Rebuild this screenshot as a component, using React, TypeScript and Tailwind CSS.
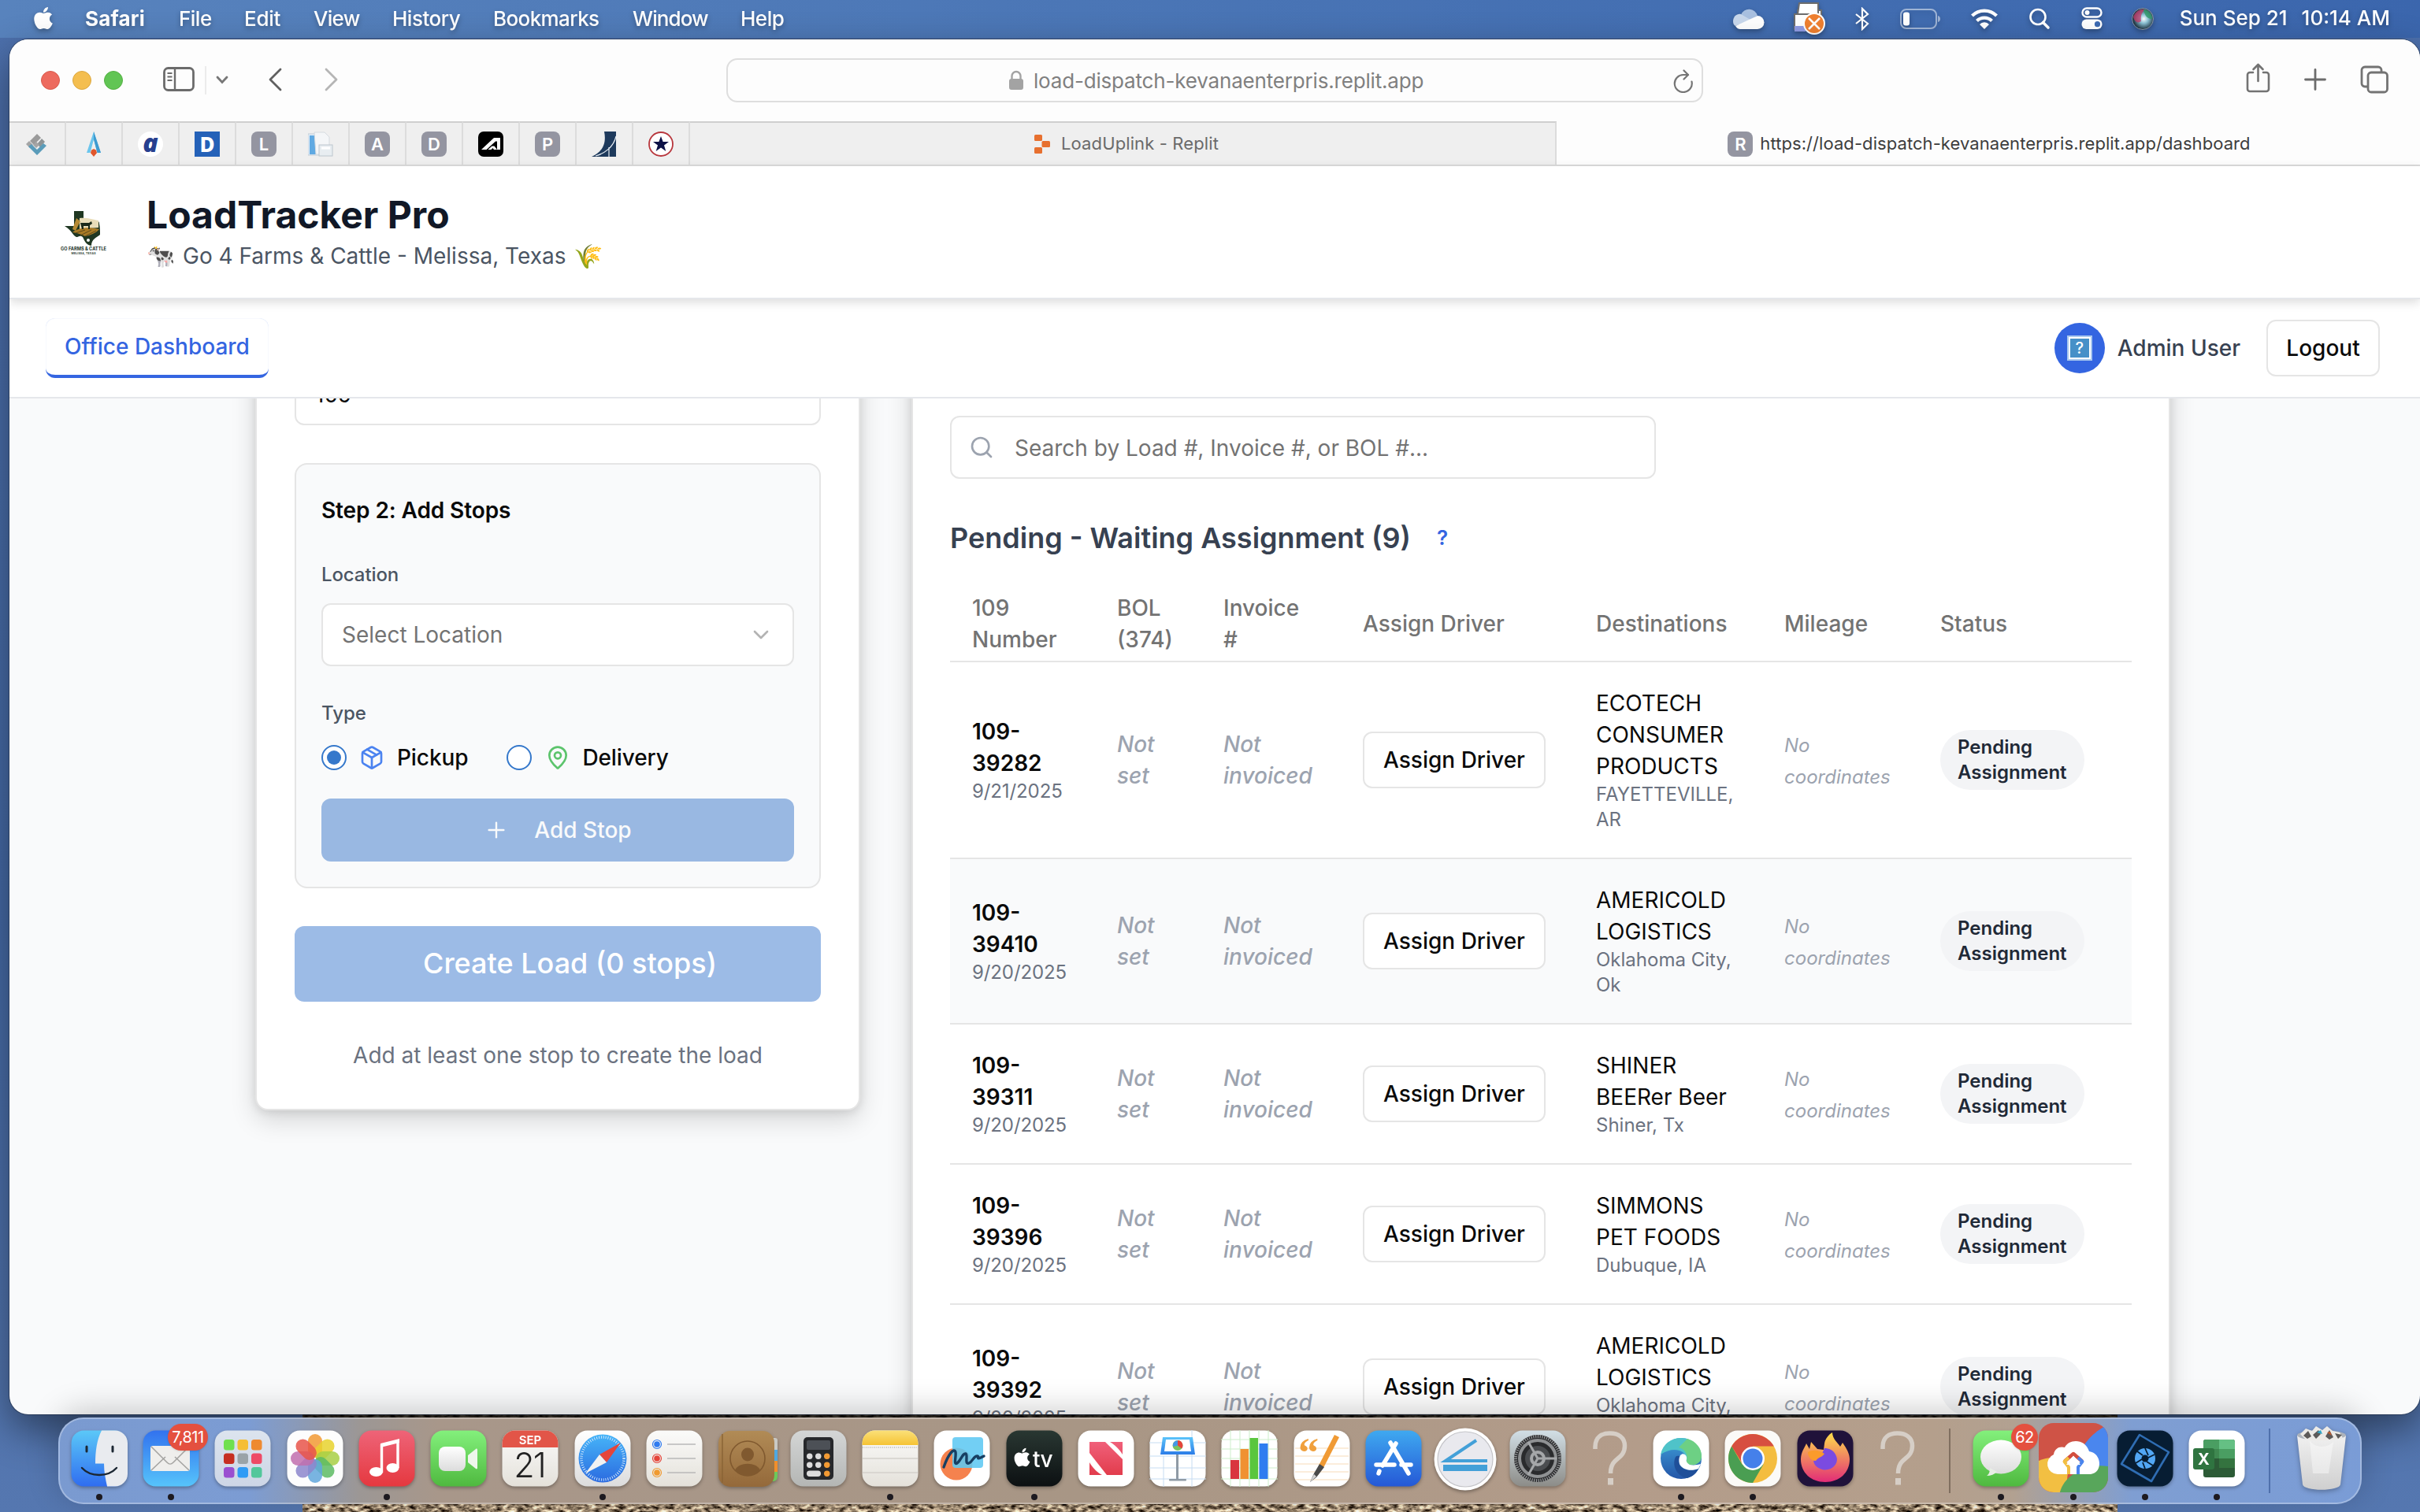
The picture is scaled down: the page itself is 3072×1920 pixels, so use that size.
import React from "react";
import { FaApple } from "react-icons/fa";
import { Package, MapPin, Plus, ChevronDown, Search } from "lucide-react";

/* ---------- Menu bar ---------- */

const MENUS = [
  { label: "Safari", cls: "w-[119px] font-bold tracking-[0.2px]" },
  { label: "File", cls: "w-[83px] tracking-[-0.5px]" },
  { label: "Edit", cls: "w-[88px] tracking-[-0.3px]" },
  { label: "View", cls: "w-[100px] tracking-[-0.7px]" },
  { label: "History", cls: "w-[128px] tracking-[-0.5px]" },
  { label: "Bookmarks", cls: "w-[177px] tracking-[-0.6px]" },
  { label: "Window", cls: "w-[137px] tracking-[-0.9px]" },
  { label: "Help", cls: "w-[60px] tracking-[-0.5px]" },
];

function MenuBar() {
  return (
    <div className="flex h-12 shrink-0 items-center bg-gradient-to-r from-[#5883bd] to-[#3b66ad] pr-[38px] pl-[41px] text-[26px] leading-none font-medium text-white">
      <FaApple className="mb-[2px] h-[32px] w-[28px] drop-shadow-[0_3px_3px_rgba(0,0,0,0.3)]" />
      <div className="mb-[1px] ml-[39px] flex drop-shadow-[0_3px_3px_rgba(0,0,0,0.3)]">
        {MENUS.map((m) => (
          <span key={m.label} className={m.cls}>{m.label}</span>
        ))}
      </div>
      <div className="ml-auto flex items-center drop-shadow-[0_3px_3px_rgba(0,0,0,0.3)]">
        <svg className="mb-[2px] h-[28px] w-[40px]" viewBox="0 0 40 28">
          <path d="M10 10a11 11 0 0 1 21 1l-9 5-14 8a9 9 0 0 1 2-15z" fill="#a9c0e0" />
          <path d="M0 18c0-6 5-10 10-9l12 7L3 24c-2-1-3-3-3-6z" fill="#c9d8ec" />
          <path d="M3 24l28-13a8.500 8.500 0 0 1 0 17H9c-2 0-4-1-6-4z" fill="#fff" />
        </svg>
        <svg className="mb-[2px] ml-[36px] h-[42px] w-[42px]" viewBox="0 0 42 42">
          <path d="M2 36V16h4v-5h30v10" fill="#fff" stroke="#6d6d6d" strokeWidth="2" />
          <path d="M6 16l2-14h24v14z" fill="#fff" stroke="#6d6d6d" strokeWidth="2" />
          <rect x="2" y="31" width="14" height="7" fill="#8f9be4" />
          <circle cx="27" cy="28" r="13" fill="#f08030" stroke="#fff" strokeWidth="2" />
          <path d="M20 21l14 14M34 21L20 35" stroke="#fff" strokeWidth="2.500" />
        </svg>
        <svg className="ml-[36px] h-[30px] w-[20px]" viewBox="0 0 20 30" fill="none" stroke="#fff" strokeWidth="2.200">
          <path d="M2 9l15 12-7 7V2l7 7L2 21" />
        </svg>
        <svg className="ml-[38px] h-[26px] w-[52px]" viewBox="0 0 52 26">
          <rect x="1" y="1" width="45" height="24" rx="7" fill="none" stroke="#fff" strokeOpacity="0.5" strokeWidth="2" />
          <rect x="4" y="4.500" width="8" height="17" rx="3" fill="#fff" />
          <path d="M48 9c4 1 4 7 0 8z" fill="#fff" fillOpacity="0.5" />
        </svg>
        <svg className="ml-[38px] h-[26px] w-[34px]" viewBox="0 0 34 26" fill="none" stroke="#fff" strokeWidth="4.200">
          <path d="M1.500 9a22 22 0 0 1 31 0" />
          <path d="M7.500 15.500a13.500 13.500 0 0 1 19 0" />
          <path d="M17 26l-6-6a8 8 0 0 1 12 0z" fill="#fff" stroke="none" />
        </svg>
        <svg className="ml-[39px] h-[28px] w-[28px]" viewBox="0 0 28 28" fill="none" stroke="#fff" strokeLinecap="round">
          <circle cx="12" cy="11.500" r="9.500" strokeWidth="2.600" />
          <path d="M18.500 18.500L25 25" strokeWidth="3.600" />
        </svg>
        <svg className="mb-[2px] ml-[39px] h-[28px] w-[28px]" viewBox="0 0 28 28">
          <rect x="1.500" y="1.500" width="24" height="11" rx="5.500" fill="none" stroke="#fff" strokeWidth="2.400" />
          <circle cx="7.500" cy="7" r="3" fill="#fff" />
          <rect x="0.500" y="15.500" width="26" height="12.500" rx="6" fill="#fff" />
          <circle cx="20.500" cy="21.700" r="3.600" fill="#3d6ab2" />
        </svg>
        <svg className="ml-[36px] h-[28px] w-[28px]" viewBox="0 0 28 28">
          <defs>
            <radialGradient id="siri" cx="0.55" cy="0.5">
              <stop offset="0" stopColor="#fff" />
              <stop offset="0.4" stopColor="#8fc5d8" />
              <stop offset="1" stopColor="#1d3340" />
            </radialGradient>
          </defs>
          <circle cx="14" cy="14" r="13.500" fill="url(#siri)" stroke="#8793a8" strokeWidth="1" />
          <path d="M2 12c2-8 10-11 15-10-4 3-6 8-5 15-4 3-8 1-10-5z" fill="#c43a68" opacity="0.75" />
          <path d="M15 2c7 0 11 7 11 12-5 0-9-2-11-12z" fill="#2f9a68" opacity="0.8" />
        </svg>
        <span className="mb-[2px] ml-[33px]">Sun Sep 21</span>
        <span className="mb-[2px] ml-[18px]">10:14 AM</span>
      </div>
    </div>
  );
}

/* ---------- Browser chrome ---------- */

function Toolbar() {
  return (
    <div className="flex h-[104px] shrink-0 items-center bg-[#fdfdfd]">
      <div className="ml-[40px] flex gap-4">
        <span className="size-6 rounded-full border border-[#d95a4c] bg-[#ed6a5e]" />
        <span className="size-6 rounded-full border border-[#dca73f] bg-[#f4be4f]" />
        <span className="size-6 rounded-full border border-[#54b043] bg-[#61c554]" />
      </div>
      <svg className="mb-[2px] ml-[51px] h-[32px] w-[40px]" viewBox="0 0 40 32" fill="none" stroke="#6b6b6b">
        <rect x="1.500" y="1.500" width="37" height="28" rx="5" strokeWidth="2.800" />
        <path d="M15 2v27" strokeWidth="2.400" />
        <path d="M5.500 8h6M5.500 12.500h6M5.500 17h6" strokeWidth="1.800" />
      </svg>
      <span className="ml-[13px] h-9 w-[2px] bg-[#ececec]" />
      <svg className="ml-[12px] h-[12px] w-[16px]" viewBox="0 0 16 12" fill="none" stroke="#777" strokeWidth="2.800" strokeLinecap="round">
        <path d="M2 2l6 6.500L14 2" />
      </svg>
      <svg className="mb-[2px] ml-[50px] h-[30px] w-[18px]" viewBox="0 0 18 30" fill="none" stroke="#606060" strokeWidth="2.800" strokeLinecap="round" strokeLinejoin="round">
        <path d="M16 2L3 15l13 13" />
      </svg>
      <svg className="mb-[2px] ml-[54px] h-[30px] w-[18px]" viewBox="0 0 18 30" fill="none" stroke="#b5b5b5" strokeWidth="2.800" strokeLinecap="round" strokeLinejoin="round">
        <path d="M2 2l13 13L2 28" />
      </svg>
      <div className="ml-[492px] flex h-[56px] w-[1240px] items-center rounded-[14px] border-2 border-[#dedede] bg-[#fdfdfd] text-[26px] text-[#808080]">
        <svg className="ml-[356px] h-[26px] w-[20px]" viewBox="0 0 20 26">
          <path d="M4.500 12V7.500a5.500 5.500 0 0 1 11 0V12" fill="none" stroke="#a3a3a3" strokeWidth="2.400" />
          <rect x="1" y="11" width="18" height="14" rx="3" fill="#a3a3a3" />
        </svg>
        <span className="ml-[12px] tracking-[-0.18px]">load-dispatch-kevanaenterpris.replit.app</span>
        <svg className="mt-[2px] mr-[10px] ml-auto h-[30px] w-[26px]" viewBox="0 0 26 30" fill="none" stroke="#757575" strokeWidth="2.200" strokeLinecap="round" strokeLinejoin="round">
          <path d="M23.500 15.500A11 11 0 1 1 13 7h6" />
          <path d="M13.500 1.500L19 7l-5.500 5.500" />
        </svg>
      </div>
      <div className="ml-[689px] flex items-center gap-[43px] pb-[2px]">
        <svg className="mb-1 h-[38px] w-[31px]" viewBox="0 0 31 38" fill="none" stroke="#737373" strokeWidth="2.600" strokeLinecap="round" strokeLinejoin="round">
          <path d="M9 12H5a3 3 0 0 0-3 3v18a3 3 0 0 0 3 3h21a3 3 0 0 0 3-3V15a3 3 0 0 0-3-3h-4" />
          <path d="M15.500 23V2M9.500 8l6-6 6 6" />
        </svg>
        <svg className="h-[28px] w-[28px]" viewBox="0 0 28 28" stroke="#6c6c6c" strokeWidth="2.800" strokeLinecap="round">
          <path d="M14 1.500v25M1.500 14h25" />
        </svg>
        <svg className="h-[36px] w-[36px]" viewBox="0 0 36 36" fill="none" stroke="#737373" strokeWidth="2.800">
          <rect x="10" y="9" width="24.500" height="25" rx="4" />
          <path d="M9 27H6a4 4 0 0 1-4-4V6a4 4 0 0 1 4-4h17a4 4 0 0 1 4 4v2" />
        </svg>
      </div>
    </div>
  );
}

function LetterIcon({ letter }: { letter: string }) {
  return (
    <span className="flex size-8 items-center justify-center rounded-lg bg-[#9495a1] text-[22px] leading-none font-semibold text-white">
      {letter}
    </span>
  );
}

const PINNED: React.ReactNode[] = [
  <svg className="size-8" viewBox="0 0 32 32">
    <path d="M16 3l5 5-9 9-5-5z" fill="#9a9a9a" />
    <path d="M22 9l4 4-6 7-4-4z" fill="#8e9496" />
    <path d="M2 16l4-4 5 5-4 4zM11 17l4-4 4 4-4 4z" fill="#a5a5a5" />
    <path d="M5 19l4-3 7 7 8-8 4 3-12 12z" fill="#5a9cba" />
  </svg>,
  <svg className="size-8" viewBox="0 0 32 32">
    <path d="M16 0L7 27h4.500L16 10l4.500 17H25z" fill="#6cc5ec" />
    <path d="M16 0l9 27h-4.500L16 10z" fill="#3f9bd0" />
    <path d="M16 22l4 5-4 5-4-5z" fill="#e0562c" />
    <circle cx="16" cy="26" r="3.600" fill="#e0562c" />
  </svg>,
  <span className="flex size-8 items-center justify-center rounded-full bg-white pb-1 font-['Open_Sans'] text-[32px] leading-none font-extrabold text-[#27408f] italic">a</span>,
  <span className="flex size-8 items-center justify-center bg-[#2461b8] font-['Noto_Sans'] text-[26px] leading-none font-extrabold text-white">D</span>,
  <LetterIcon letter="L" />,
  <svg className="size-8" viewBox="0 0 32 32">
    <rect x="0" y="3" width="14" height="27" fill="#e3eef8" stroke="#c2ccd6" />
    <rect x="2" y="5" width="8" height="24" fill="#5fa9e2" />
    <path d="M8 1h13l6 6v22H10z" fill="#f4f6f8" stroke="#d5dbe0" />
    <rect x="14" y="17" width="17" height="14" fill="#e8edf1" stroke="#bcc6ce" />
    <path d="M17 21h11" stroke="#fff" strokeWidth="3" />
  </svg>,
  <LetterIcon letter="A" />,
  <LetterIcon letter="D" />,
  <svg className="size-8" viewBox="0 0 32 32">
    <rect width="32" height="32" rx="7" fill="#000" />
    <path d="M4 23L20 8h8v15h-4V12.500h-2L10.500 23z" fill="#fff" />
    <path d="M12.500 23l5-4.500h3L24 23h-4l-1.500-2-2 2z" fill="#fff" />
  </svg>,
  <LetterIcon letter="P" />,
  <svg className="size-8" viewBox="0 0 32 32">
    <path d="M16 0h15v32H0c9-4 20-12 16-32z" fill="#1e3a5c" />
    <path d="M31 6C28 20 16 28 5 31M22 20v12" stroke="#e8eef5" strokeWidth="1.200" fill="none" />
  </svg>,
  <svg className="size-8" viewBox="0 0 32 32">
    <circle cx="16" cy="16" r="15" fill="#fff" stroke="#b8373d" strokeWidth="1.800" />
    <path d="M16 6l2.600 7h7.400l-6 4.500 2.300 7.500-6.300-4.600L9.700 25l2.300-7.500L6 13h7.400z" fill="#0d1146" />
  </svg>,
];

function TabBar() {
  return (
    <div className="flex h-[57px] shrink-0 border-b-2 border-[#dcdcdc] bg-[#fdfdfd]">
      {PINNED.map((icon, i) => (
        <div key={i} className="flex w-[72px] shrink-0 items-center justify-center border-t-2 border-r-2 border-t-[#cfcfcf] border-r-[#dcdcdc] bg-[#efefef]">
          {icon}
        </div>
      ))}
      <div className="flex w-[1100px] shrink-0 items-center justify-center border-t-2 border-r-2 border-t-[#cfcfcf] border-r-[#dcdcdc] bg-[#efefef] pl-[10px] text-[22px] text-[#6a6a6a]">
        <svg className="mr-[14px] h-[24px] w-[20px]" viewBox="0 0 20 24" fill="#e7702f">
          <rect x="0" y="0" width="10" height="8" rx="1.500" />
          <rect x="9.500" y="8" width="10.500" height="8" rx="1.500" />
          <rect x="0" y="16" width="10" height="8" rx="1.500" />
        </svg>
        <span className="tracking-[0.12px]">LoadUplink - Replit</span>
      </div>
      <div className="flex flex-1 items-center justify-center pt-[2px] pl-[2px] text-[22px] text-[#3d3d3d]">
        <LetterIcon letter="R" />
        <span className="ml-[9px] tracking-[0.07px]">https://load-dispatch-kevanaenterpris.replit.app/dashboard</span>
      </div>
    </div>
  );
}

/* ---------- LoadTracker page ---------- */

function TexasLogo() {
  return (
    <svg className="h-[64px] w-[64px]" viewBox="0 0 64 64">
      <path d="M20 5h12v10c4 2 9 2 14 2 4 0 6 1 6 4 1 5 1 9 1 14-5 4-11 6-11 14-7-1-9-7-11-11-3-3-6 0-8 0-5-2-5-8-15-14h12z" fill="#1f3722" />
      <path d="M27 14c8-1 14 1 24 3v9l-24 2z" fill="#e9ddb9" />
      <path d="M18 32c8-6 20-7 34-4-4 5-12 8-18 9-6-3-10-4-16-5z" fill="#a97b26" />
      <path d="M23 14l5 4-6 12-4-2z" fill="#b58a35" />
      <path d="M28 20h11l3-2 1 3-3 2v5h-2v-4h-6v4h-2z" fill="#1b2a1b" />
      <path d="M22 33l12-4M28 36l14-7M34 37l14-7" stroke="#5d4a1c" strokeWidth="1" />
      <circle cx="38" cy="42" r="2" fill="#fff" />
      <text x="32" y="55" textAnchor="middle" fontFamily="Inter" fontSize="5.600" fontWeight="700" fill="#24352a" textLength="58">GO FARMS &amp; CATTLE</text>
      <text x="32" y="60" textAnchor="middle" fontFamily="Inter" fontSize="3.600" fontWeight="600" fill="#24352a" textLength="31">MELISSA, TEXAS</text>
    </svg>
  );
}

function PageHeader() {
  return (
    <>
      <header className="relative z-20 flex h-[169px] shrink-0 items-center border-b-2 border-[#e5e7eb] bg-white shadow-[0_4px_12px_rgba(0,0,0,0.14)]">
        <div className="ml-[62px]"><TexasLogo /></div>
        <div className="ml-[48px] pb-[3px]">
          <h1 className="text-[48px] leading-[64px] font-bold text-[#111827]">LoadTracker Pro</h1>
          <p className="flex items-center text-[28px] leading-[40px] text-[#4b5563]">
            <span className="w-[46px] text-[29px] tracking-[-2px]">🐄</span>
            Go 4 Farms &amp; Cattle - Melissa, Texas
            <span className="ml-[10px] text-[30px]">🌾</span>
          </p>
        </div>
      </header>
      <nav className="relative z-10 flex h-[126px] shrink-0 items-center border-b-2 border-[#e5e7eb] bg-white pr-[51px]">
        <div className="ml-[46px] flex h-[76px] w-[283px] items-center justify-center rounded-[12px] border-b-4 border-[#3465e1] text-[28px] font-medium text-[#3465e1] shadow-[inset_0_0_1px_rgba(52,101,225,0.35)]">
          Office Dashboard
        </div>
        <div className="ml-auto flex items-center">
          <span className="flex size-16 items-center justify-center rounded-full bg-[#3465e1]">
            <span className="flex size-8 items-center justify-center border-2 border-[#a9c8ee] bg-white p-[2px]">
              <span className="flex size-full items-center justify-center bg-[#4690c8] text-[20px] leading-none font-medium text-white">?</span>
            </span>
          </span>
          <span className="ml-4 text-[28px] font-medium text-[#374151]">Admin User</span>
          <span className="ml-[33px] flex h-[72px] w-[144px] items-center justify-center rounded-[12px] border-2 border-[#e5e5e5] text-[28px] font-medium text-[#0a0a0a]">
            Logout
          </span>
        </div>
      </nav>
    </>
  );
}

function CreateLoadCard() {
  return (
    <section className="mt-[-100px] ml-[312px] flex h-[1004px] w-[768px] shrink-0 flex-col rounded-[16px] border-2 border-[#e5e5e5] bg-white px-[48px] pt-[52px] shadow-[0_12px_32px_rgba(0,0,0,0.15),0_2px_12px_rgba(0,0,0,0.1)]">
      <div className="flex h-[80px] shrink-0 items-center rounded-[12px] border-2 border-[#e5e5e5] px-[24px] pt-[2px] text-[28px] text-[#0a0a0a]">109</div>
      <div className="mt-[48px] h-[540px] shrink-0 rounded-[16px] border-2 border-[#e5e5e5] bg-[#f9fafb] p-[32px]">
        <h3 className="text-[28px] leading-[52px] font-semibold tracking-[-0.1px] text-[#0a0a0a]">Step 2: Add Stops</h3>
        <div className="mt-[40px] text-[24px] leading-[32px] font-medium tracking-[-0.1px] text-[#4b5563]">Location</div>
        <div className="mt-[20px] flex h-[80px] items-center justify-between rounded-[12px] border-2 border-[#e5e5e5] bg-white pr-[24px] pl-[24px] text-[28px] text-[#737373]">
          Select Location
          <ChevronDown className="size-8 text-[#b3b3b3]" strokeWidth={2} />
        </div>
        <div className="mt-[44px] text-[24px] leading-[32px] font-medium text-[#4b5563]">Type</div>
        <div className="mt-[20px] flex h-[40px] items-center text-[28px] font-medium text-[#0a0a0a]">
          <span className="flex size-8 items-center justify-center rounded-full border-2 border-[#3578cb] bg-white">
            <span className="size-[18px] rounded-full bg-[#3578cb]" />
          </span>
          <Package className="ml-4 size-8 text-[#4b83f0]" strokeWidth={2} />
          <span className="ml-4 tracking-[-0.1px]">Pickup</span>
          <span className="ml-[49px] size-8 rounded-full border-2 border-[#3578cb] bg-white" />
          <MapPin className="ml-[17px] size-8 text-[#5cc46c]" strokeWidth={2} />
          <span className="ml-[15px] tracking-[-0.1px]">Delivery</span>
        </div>
        <div className="mt-[32px] flex h-[80px] items-center justify-center rounded-[12px] bg-[#99b8e2] text-[28px] font-medium text-[#f9fafb]">
          <Plus className="size-8" strokeWidth={1.8} />
          <span className="ml-[32px]">Add Stop</span>
        </div>
      </div>
      <div className="mt-[48px] flex h-[96px] shrink-0 items-center justify-center rounded-[12px] bg-[#9cbbe6] pb-[2px] pl-[31px] text-[36px] font-medium text-white">
        Create Load (0 stops)
      </div>
      <p className="mt-[48px] text-center text-[28px] leading-[40px] text-[#6b7280]">Add at least one stop to create the load</p>
    </section>
  );
}

type Load = { id: string; date: string; dest: string[]; city: string[]; h: string; tint?: boolean };

const LOADS: Load[] = [
  { id: "39282", date: "9/21/2025", dest: ["ECOTECH", "CONSUMER", "PRODUCTS"], city: ["FAYETTEVILLE,", "AR"], h: "h-[250px]" },
  { id: "39410", date: "9/20/2025", dest: ["AMERICOLD", "LOGISTICS"], city: ["Oklahoma City,", "Ok"], h: "h-[210px]", tint: true },
  { id: "39311", date: "9/20/2025", dest: ["SHINER", "BEERer Beer"], city: ["Shiner, Tx"], h: "h-[178px]" },
  { id: "39396", date: "9/20/2025", dest: ["SIMMONS", "PET FOODS"], city: ["Dubuque, IA"], h: "h-[178px]" },
  { id: "39392", date: "9/20/2025", dest: ["AMERICOLD", "LOGISTICS"], city: ["Oklahoma City,", "Ok"], h: "h-[210px]" },
];

const COLS = "grid grid-cols-[184px_135px_177px_296px_239px_198px_271px] items-center border-b-2 border-[#e5e5e5] *:pl-[28px]";

function Lines({ items, className }: { items: string[]; className: string }) {
  return <>{items.map((t) => <div key={t} className={className}>{t}</div>)}</>;
}

function LoadRow({ load }: { load: Load }) {
  return (
    <div className={`${COLS} ${load.h} ${load.tint ? "bg-[#f9fafb]" : ""} text-[28px] leading-[40px]`}>
      <div>
        <div className="font-semibold text-[#0a0a0a]">109-<br />{load.id}</div>
        <div className="text-[24px] leading-[32px] tracking-[-0.1px] text-[#6b7280]">{load.date}</div>
      </div>
      <div className="font-medium text-[#9ca3af] italic">Not<br />set</div>
      <div className="font-medium text-[#9ca3af] italic">Not<br />invoiced</div>
      <div>
        <div className="flex h-[72px] w-[232px] items-center justify-center rounded-[12px] border-2 border-[#e5e5e5] bg-white font-medium text-[#0a0a0a]">Assign Driver</div>
      </div>
      <div className="whitespace-nowrap">
        <Lines items={load.dest} className="text-[#0a0a0a]" />
        <Lines items={load.city} className="text-[24px] leading-[32px] text-[#6b7280]" />
      </div>
      <div className="pt-[3px] text-[24px] text-[#9ca3af] italic">No<br />coordinates</div>
      <div>
        <div className="w-[183px] rounded-[38px] bg-[#f3f4f6] py-[6px] pl-[22px] text-[24px] leading-[32px] font-semibold text-[#1f2937]">Pending<br />Assignment</div>
      </div>
    </div>
  );
}

function LoadsCard() {
  return (
    <section className="mt-[-100px] ml-[65px] h-[1600px] w-[1598px] shrink-0 rounded-[16px] border-2 border-[#e5e5e5] bg-white px-[47px] pt-[120px] shadow-[0_2px_32px_rgba(0,0,0,0.16),0_2px_12px_rgba(0,0,0,0.1)]">
      <div className="flex h-[80px] w-[896px] items-center rounded-[12px] border-2 border-[#e5e5e5] pl-[22px] text-[28px] text-[#737373]">
        <Search className="size-8 text-[#9ca3af]" strokeWidth={2} />
        <span className="ml-[26px] pt-[2px]">Search by Load #, Invoice #, or BOL #...</span>
      </div>
      <h2 className="mt-[47px] flex h-[56px] items-center text-[36px] leading-[56px] font-semibold text-[#374151]">
        Pending - Waiting Assignment (9)
        <span className="ml-[33px] text-[26px] leading-none text-[#3465e1]">?</span>
      </h2>
      <div className={`${COLS} mt-[33px] h-[97px] text-[28px] leading-[40px] font-medium text-[#737373]`}>
        <div>109<br />Number</div>
        <div>BOL<br />(374)</div>
        <div>Invoice<br />#</div>
        <div>Assign Driver</div>
        <div>Destinations</div>
        <div>Mileage</div>
        <div>Status</div>
      </div>
      {LOADS.map((l) => <LoadRow key={l.id} load={l} />)}
    </section>
  );
}

/* ---------- Dock ---------- */

function Tile({ fill, children }: { fill: string; children?: React.ReactNode }) {
  return (
    <svg className="size-[72px] drop-shadow-[0_2px_2px_rgba(0,0,0,0.3)]" viewBox="0 0 72 72">
      <rect x="0.500" y="0.500" width="71" height="71" rx="16" fill={fill} />
      {children}
    </svg>
  );
}

function DockGradients() {
  const g: [string, string, string][] = [
    ["gFinder", "#5bc8f8", "#2f6df0"], ["gMail", "#3272ee", "#56c4fb"], ["gMusic", "#ee6478", "#e5383f"],
    ["gFace", "#83f07c", "#4fb93f"], ["gBody", "#ffffff", "#dcdcdc"], ["gCompass", "#46b4f8", "#2b6be0"],
    ["gBook", "#b18b56", "#94693a"], ["gGray", "#d4d6d6", "#b4b6b4"], ["gPaper", "#fbfbfa", "#e4e1da"],
    ["gYellow", "#fbe078", "#f5c334"], ["gTv", "#293732", "#0c1012"], ["gStore", "#3fa9f0", "#2558d6"],
    ["gSettings", "#d2dfe6", "#8c8c88"], ["gBin", "#f0f0f0", "#cfcfcf"], ["gKey", "#5cc4fa", "#2c7de8"],
    ["gFox", "#ffde4a", "#e22c77"], ["gEdge", "#3f9fd8", "#2456a8"], ["gPad", "#dce4ee", "#cdd6e6"],
    ["gNews", "#f0607a", "#e23c4c"],
  ];
  return (
    <svg className="absolute size-0">
      <defs>
        {g.map(([id, a, b]) => (
          <linearGradient key={id} id={id} x1="0" y1="0" x2="0" y2="1">
            <stop offset="0" stopColor={a} />
            <stop offset="1" stopColor={b} />
          </linearGradient>
        ))}
      </defs>
    </svg>
  );
}

const PETALS = ["#f29a34", "#e8d22e", "#a8cf45", "#5dbb63", "#62a7dc", "#8c86cc", "#c16fae", "#e8554a"];
const PAD = ["#6fe04f", "#f5be35", "#ee8a30", "#c62f22", "#9aa3a8", "#ee4a66", "#9a4fd0", "#2f9bf5", "#52c79b"];

const icons = {
  finder: (
    <Tile fill="url(#gFinder)">
      <path d="M39 0.500h17a16 16 0 0 1 16 16v39a16 16 0 0 1-16 16H46c-2-9-4-18-4-29H31C31 27 33 12 39 0.500z" fill="#e9ebef" />
      <path d="M20 21v6M53 21v6" stroke="#1c2733" strokeWidth="3" strokeLinecap="round" />
      <path d="M14 48c11 12 33 12 44 0" fill="none" stroke="#1c2733" strokeWidth="2.400" strokeLinecap="round" />
    </Tile>
  ),
  mail: (
    <Tile fill="url(#gMail)">
      <rect x="10" y="20" width="50" height="32" rx="3" fill="#efeeec" />
      <path d="M11 51l18-17M59 51L41 34M11 21l20 20c3 3 5 3 8 0l20-20" fill="none" stroke="#a5a4a2" strokeWidth="1.600" />
    </Tile>
  ),
  launchpad: (
    <Tile fill="url(#gPad)">
      {PAD.map((c, i) => (
        <rect key={c} x={12 + (i % 3) * 17.500} y={12 + Math.floor(i / 3) * 17.500} width="13.500" height="13.500" rx="3.500" fill={c} />
      ))}
    </Tile>
  ),
  photos: (
    <Tile fill="#fdfdfd">
      {PETALS.map((c, i) => (
        <rect key={c} x="27" y="5" width="18" height="30" rx="9" fill={c} fillOpacity="0.85" transform={`rotate(${i * 45} 36 36)`} />
      ))}
    </Tile>
  ),
  music: (
    <Tile fill="url(#gMusic)">
      <path d="M28 17l24-6v5L28 22z" fill="#fff" />
      <path d="M29.500 18v36M50 12v36" stroke="#fff" strokeWidth="3.400" />
      <ellipse cx="22.500" cy="53" rx="8.500" ry="6" fill="#fff" />
      <ellipse cx="43.500" cy="48" rx="8" ry="6" fill="#fff" />
    </Tile>
  ),
  facetime: (
    <Tile fill="url(#gFace)">
      <rect x="11" y="21" width="34" height="31" rx="8" fill="url(#gBody)" />
      <path d="M48 32l10-8c1-1 2 0 2 1v23c0 1-1 2-2 1l-10-8z" fill="#eef6ec" />
    </Tile>
  ),
  calendar: (
    <Tile fill="url(#gPaper)">
      <path d="M0.500 22V16.500a16 16 0 0 1 16-16h39a16 16 0 0 1 16 16V22z" fill="#e25548" />
      <text x="36" y="17.500" textAnchor="middle" fontFamily="Inter" fontSize="15" fontWeight="600" fill="#fff">SEP</text>
      <text x="35" y="60" textAnchor="middle" fontFamily="Inter" fontSize="43" fontWeight="300" fill="#222" letterSpacing="-2">21</text>
    </Tile>
  ),
  safari: (
    <Tile fill="url(#gBody)">
      <circle cx="36" cy="36" r="30.500" fill="url(#gCompass)" />
      <circle cx="36" cy="36" r="27" fill="none" stroke="#d8ebfb" strokeWidth="3.500" strokeDasharray="0.9 2" />
      <path d="M59 16L32 31l9 10z" fill="#e5453b" />
      <path d="M14 55l18-24 9 10z" fill="#f2f2f2" />
    </Tile>
  ),
  reminders: (
    <Tile fill="url(#gPaper)">
      {["#2f7bf0", "#e5443a", "#f09a30"].map((c, i) => (
        <g key={c}>
          <circle cx="14" cy={18 + i * 18} r="5.500" fill="none" stroke={c} strokeWidth="1.200" />
          <circle cx="14" cy={18 + i * 18} r="3.800" fill={c} />
          <path d={`M27 ${18 + i * 18}h36`} stroke="#b8b8b8" strokeWidth="1.300" />
        </g>
      ))}
    </Tile>
  ),
  contacts: (
    <svg className="ml-1 h-[72px] w-[76px] drop-shadow-[0_2px_2px_rgba(0,0,0,0.3)]" viewBox="0 0 76 72">
      <path d="M68 10h5a3 3 0 0 1 3 3v12h-8z" fill="#c9c9c4" />
      <path d="M68 25h8v14h-8z" fill="#4fa8e0" />
      <path d="M68 39h8v14h-8z" fill="#f08f2c" />
      <path d="M68 53h8v6a6 6 0 0 1-5 6h-3z" fill="#6cc95a" />
      <rect x="1" y="1" width="71" height="71" rx="15" fill="url(#gBook)" />
      <path d="M6 5v62" stroke="#8a6436" strokeWidth="1.500" />
      <circle cx="38" cy="36" r="22" fill="none" stroke="#80592f" strokeWidth="1.600" />
      <ellipse cx="38" cy="31" rx="8" ry="8.500" fill="#80592f" />
      <path d="M22 51c4-11 28-11 32 0-8 9-24 9-32 0z" fill="#80592f" />
    </svg>
  ),
  calculator: (
    <Tile fill="url(#gGray)">
      <rect x="17" y="9" width="38" height="54" rx="5" fill="#26282b" />
      <rect x="21" y="13" width="30" height="12" rx="2" fill="#4c5056" />
      {[0, 1, 2].map((c) => [0, 1, 2].map((r) => (
        r === 2 && c === 1 ? null :
        <rect key={`${c}${r}`} x={21 + c * 11} y={29.500 + r * 11} width={r === 2 && c === 0 ? 18 : 7.500} height="7.500" rx="3.700" fill={c === 2 ? "#f29a33" : "#dcdcdc"} />
      )))}
    </Tile>
  ),
  notes: (
    <Tile fill="url(#gPaper)">
      <path d="M0.500 19v-2.500a16 16 0 0 1 16-16h39a16 16 0 0 1 16 16V19z" fill="url(#gYellow)" />
      <path d="M1 22h70" stroke="#b9b6ae" strokeWidth="1.500" strokeDasharray="1 1.500" />
      <path d="M1 36h70M1 54h70" stroke="#d3d1cb" strokeWidth="1.500" />
    </Tile>
  ),
  freeform: (
    <Tile fill="#ffffff">
      <circle cx="29" cy="43" r="20.500" fill="#f5824e" />
      <rect x="24" y="9" width="39" height="39" rx="4" fill="#5ec8f2" fillOpacity="0.88" />
      <path d="M13 47c6-17 13-25 15-19 1 6-3 17 2 14 5-4 7-13 11-12 3 2-2 14 4 12 5-2 6-10 11-9 3 1-4 6 8 0" fill="none" stroke="#173f63" strokeWidth="3.400" strokeLinecap="round" />
    </Tile>
  ),
  tv: (
    <Tile fill="url(#gTv)">
      <FaApple x={7} y={21} size={27} color="#fff" />
      <text x="34" y="47" fontFamily="Inter" fontSize="28" fontWeight="500" fill="#fff" letterSpacing="-0.5">tv</text>
    </Tile>
  ),
  news: (
    <Tile fill="#ffffff">
      <rect x="15" y="15" width="42" height="42" fill="url(#gNews)" />
      <path d="M35 15h6c5 3 12 9 16 16v6z" fill="#fff" />
      <path d="M15 29l22 28h-6c-6-3-12-9-16-16z" fill="#fff" />
    </Tile>
  ),
  keynote: (
    <Tile fill="#ffffff">
      <path d="M0 16h72M0 33h72M0 48h72M0 62h72M18 33v39M54 0v72" stroke="#c6dcf2" strokeWidth="1" />
      <path d="M17 9h38l3 22H14z" fill="url(#gKey)" />
      <path d="M21 12h30l2 15H19z" fill="#fff" />
      <circle cx="36" cy="19.500" r="6.500" fill="#7ac360" />
      <path d="M36 19.500V13a6.500 6.500 0 0 1 5 10.500z" fill="#e5453b" />
      <path d="M36 19.500V13a6.500 6.500 0 0 0-6 8z" fill="#4596e8" />
      <path d="M35.500 31v33" stroke="#8f9aa5" strokeWidth="3" />
      <rect x="25" y="62" width="22" height="2.500" rx="1" fill="#8f9aa5" />
    </Tile>
  ),
  numbers: (
    <Tile fill="#ffffff">
      <path d="M0 12h72M0 24h72M0 36h72M0 48h72M0 62h72M12 0v72M24 0v72M36 0v72M48 0v72M60 0v72" stroke="#cdeecb" strokeWidth="1" />
      <rect x="12" y="38" width="11" height="24" fill="#d9363e" />
      <rect x="24.500" y="24" width="10.500" height="38" fill="#f09132" />
      <rect x="36.500" y="10" width="10.500" height="52" fill="#5ac63e" />
      <rect x="48.500" y="17" width="11" height="45" fill="#2f7df0" />
    </Tile>
  ),
  pages: (
    <Tile fill="#ffffff">
      <path d="M2 23h68M2 33h68M2 43h68M2 53h68M2 63h68" stroke="#f8dcb8" strokeWidth="1.200" />
      <text x="6" y="46" fontFamily="Liberation Serif" fontSize="52" fontWeight="700" fill="#f0a03c">“</text>
      <path d="M52 6l6 3-19 37-8 11-2-1 4-13z" fill="#f09a34" />
      <path d="M33 43l6 4-10 13-8 6 5-11z" fill="#4a4a4a" />
      <path d="M26 56l3 3-8 7z" fill="#d5d5d5" />
    </Tile>
  ),
  appstore: (
    <Tile fill="url(#gStore)">
      <path d="M39 17L22 45M32 16l23 39M18 52l-1 3M14 44h23M46 44h12" stroke="#fff" strokeWidth="5.500" strokeLinecap="round" fill="none" />
    </Tile>
  ),
  scanner: (
    <svg className="mt-[-3px] mb-[-5px] size-[80px] drop-shadow-[0_2px_2px_rgba(0,0,0,0.35)]" viewBox="0 0 80 80">
      <circle cx="40" cy="40" r="39.500" fill="#fff" />
      <circle cx="40" cy="40" r="35" fill="#e9e9ee" stroke="#c4c4c8" strokeWidth="1.200" />
      <path d="M54 16L15 42h53" fill="none" stroke="#43a0d8" strokeWidth="4" />
      <rect x="12" y="47" width="56" height="8" fill="#43a0d8" />
    </svg>
  ),
  settings: (
    <Tile fill="url(#gSettings)">
      <circle cx="36" cy="36" r="30" fill="#2a2b2d" />
      <circle cx="36" cy="36" r="28" fill="none" stroke="#97999b" strokeWidth="4" strokeDasharray="1.200 1.600" />
      <circle cx="36" cy="36" r="23" fill="none" stroke="#8f9193" strokeWidth="4" />
      <circle cx="36" cy="36" r="16" fill="#4b4d50" />
      <circle cx="36" cy="36" r="8" fill="none" stroke="#a5a7a9" strokeWidth="4" />
      <path d="M36 36h24M36 36L24 15M36 36L24 57" stroke="#a5a7a9" strokeWidth="3" />
    </Tile>
  ),
  question: (
    <svg className="size-[72px]" viewBox="0 0 72 72" fill="none" stroke="#d6cec6" strokeLinejoin="round">
      <path d="M18 24v-3C18 9 26 4 36.500 4s19 5 19 16-7 14-13 20c-4 4-5 8-5 15" strokeWidth="5.500" />
      <path d="M37.500 61v8.500" strokeWidth="7" />
    </svg>
  ),
  edge: (
    <Tile fill="#ffffff">
      <circle cx="36" cy="36" r="26" fill="url(#gEdge)" />
      <path d="M10 31C13 17 24 10 36 10c15 0 26 11 26 23 0 8-7 12-14 11-4 0-6-3-5-5 1-12-15-20-33-8z" fill="#4fc3c9" />
      <path d="M44 11c11 3 18 12 18 22 0 8-7 12-14 11-4 0-6-3-5-5 2-8-2-15-10-17z" fill="#7ad667" fillOpacity="0.7" />
      <path d="M29 34c-5 10 1 25 15 27 7-2 12-7 14-12-10 5-22 1-24-6-1-4 0-7 2-9-3-2-6-1-7 0z" fill="#1f4f99" />
      <path d="M35 32c4-4 9 0 8 5-1 3 1 5 4 7 5 1 10 0 14-1l-3 6c-10 4-21 1-24-6-1-4-1-8 1-11z" fill="#fff" />
    </Tile>
  ),
  chrome: (
    <Tile fill="#fbfaf7">
      <circle cx="36" cy="36" r="31" fill="#f4bd3f" />
      <path d="M9.200 20.500A31 31 0 0 1 62.800 20.500H36L22 41z" fill="#d74f40" />
      <path d="M9.200 20.500A31 31 0 0 0 36 67l13.500-23.500-27 0z" fill="#4a9e52" />
      <circle cx="36" cy="36" r="15" fill="#fff" />
      <circle cx="36" cy="36" r="12.500" fill="#4580ea" />
    </Tile>
  ),
  firefox: (
    <Tile fill="#20123a">
      <path d="M36 66C18 66 5 54 5 37c0-9 5-15 7-20l4 7 2-9 8 9 8 1 1-8c1-6 5-11 10-14 0 8 7 13 10 18l3-5c5 7 9 14 9 21 0 17-13 29-31 29z" fill="url(#gFox)" />
      <path d="M21 39a15 13 0 1 0 29-6c-3-8-10-10-15-10l-4 9z" fill="#7b4be0" />
      <path d="M14 28c7-4 14-2 21 2-3 5-8 4-11 9-6 0-10-5-10-11z" fill="#fb9b2b" />
    </Tile>
  ),
  messages: (
    <Tile fill="url(#gFace)">
      <ellipse cx="36" cy="34" rx="26" ry="21.500" fill="url(#gBody)" />
      <path d="M22 48c0 5-1 8-4 10 5 0 10-2 13-5z" fill="#e8eee6" />
    </Tile>
  ),
  cloud: (
    <svg className="mt-[-9px] mb-[-7px] size-[88px]" viewBox="0 0 88 88">
      <defs><clipPath id="cloudTile"><rect width="88" height="88" rx="19" /></clipPath></defs>
      <g clipPath="url(#cloudTile)">
        <rect width="88" height="88" fill="#cf5346" />
        <path d="M88 2C68 12 56 26 50 44l14 12 24 4z" fill="#4a86ee" />
        <path d="M0 48c14-6 26-6 38 4l-2 20-9 16H0z" fill="#f2bf42" />
        <path d="M27 88c4-20 32-38 61-33v33z" fill="#58a65b" />
      </g>
      <path d="M24 65a13 13 0 0 1-5-25c1-8 8-11 14-9 5-11 26-12 31 5 16 2 18 27 2 29z" fill="#fff" />
      <path d="M33.500 49v-1L44 39l10.500 9v1" fill="none" stroke="#d34e3f" strokeWidth="4.500" strokeLinejoin="round" />
      <path d="M50 44l5.500 5-5.500 7v9" fill="none" stroke="#4a86ee" strokeWidth="4" strokeLinejoin="round" />
      <path d="M38 44l-5.500 5 5.500 7v9" fill="none" stroke="#f2bf42" strokeWidth="4" strokeLinejoin="round" />
      <path d="M44 41.500L53 53h-5.500v12h-7V53H35z" fill="#fff" />
    </svg>
  ),
  elements: (
    <Tile fill="#071d33">
      <path d="M29 6l37 22-22 37L6 43z" fill="none" stroke="#2f6db3" strokeWidth="2.600" strokeLinejoin="round" />
      <circle cx="36" cy="36" r="13" fill="#52a7f5" />
      <path d="M36 23l4 9M48 31l-8 4M46 45l-8-5M36 49l-3-8M24 42l8-5M26 27l7 5" stroke="#071d33" strokeWidth="1.800" />
      <circle cx="36" cy="36" r="4.500" fill="#071d33" />
    </Tile>
  ),
  excel: (
    <Tile fill="#ffffff">
      <rect x="19" y="12" width="40" height="48" rx="3" fill="#2c5b36" />
      <path d="M19 15a3 3 0 0 1 3-3h17v12H19z" fill="#4a9e62" />
      <path d="M39 12h17a3 3 0 0 1 3 3v9H39z" fill="#65c084" />
      <path d="M19 24h20v12H19z" fill="#3f8850" />
      <path d="M39 24h20v12H39z" fill="#4a9e62" />
      <path d="M39 36h20v12H39z" fill="#34733f" />
      <rect x="6" y="23" width="27" height="27" rx="3" fill="#2f7440" />
      <text x="19.500" y="44" textAnchor="middle" fontFamily="Inter" fontSize="20" fontWeight="700" fill="#fff">X</text>
    </Tile>
  ),
  trash: (
    <svg className="mt-[-7px] mb-[-5px] h-[84px] w-[66px] drop-shadow-[0_2px_3px_rgba(0,0,0,0.3)]" viewBox="0 0 66 84">
      <ellipse cx="33" cy="14" rx="31" ry="7" fill="#aeb4bc" />
      <path d="M6 12l7-7 8 3 5-6 8 5 6-5 7 6 9 2 4 7-20 6-24-1z" fill="#eceae6" />
      <path d="M2 14c6 8 56 8 62 0l-7 62c-1 9-47 9-48 0z" fill="url(#gBin)" />
      <path d="M18 20c4 8 20 12 30 2l-6 40H22z" fill="#fff" fillOpacity="0.4" />
      <path d="M10 14l6-6 4 7-5 3zM22 13l4 5 6-6-3-5zM38 15l5-8 5 9-5 3zM50 11l4 7 5-5z" fill="#5d5a58" />
      <path d="M27 10l5-3 2 5z" fill="#2fa7c9" />
      <path d="M40 10l4-1 2 5z" fill="#c25a2c" />
    </svg>
  ),
};

type DockItem = { icon: React.ReactNode; running?: boolean; badge?: string };

const APPS: DockItem[] = [
  { icon: icons.finder, running: true },
  { icon: icons.mail, running: true, badge: "7,811" },
  { icon: icons.launchpad }, { icon: icons.photos },
  { icon: icons.music, running: true },
  { icon: icons.facetime }, { icon: icons.calendar },
  { icon: icons.safari, running: true },
  { icon: icons.reminders }, { icon: icons.contacts }, { icon: icons.calculator },
  { icon: icons.notes, running: true },
  { icon: icons.freeform },
  { icon: icons.tv, running: true },
  { icon: icons.news }, { icon: icons.keynote }, { icon: icons.numbers }, { icon: icons.pages },
  { icon: icons.appstore }, { icon: icons.scanner }, { icon: icons.settings }, { icon: icons.question },
  { icon: icons.edge, running: true },
  { icon: icons.chrome, running: true },
  { icon: icons.firefox }, { icon: icons.question },
];

const RECENT: DockItem[] = [
  { icon: icons.messages, running: true, badge: "62" },
  { icon: icons.cloud, running: true },
  { icon: icons.elements, running: true },
  { icon: icons.excel, running: true },
];

function DockSlot({ item }: { item: DockItem }) {
  return (
    <div className="relative flex w-[91.3px] shrink-0 flex-col items-center pt-[14px]">
      {item.icon}
      {item.running && <span className="mt-[9px] size-2 rounded-full bg-[#1d1a20]" />}
      {item.badge && (
        <span className="absolute top-[6px] right-[-1px] flex h-[34px] min-w-[34px] items-center justify-center rounded-full bg-[#e4503f] px-[5px] text-[20px] leading-none tracking-[-0.5px] text-white shadow">
          {item.badge}
        </span>
      )}
    </div>
  );
}

function Dock() {
  return (
    <div className="absolute top-[1800px] left-[74px] flex h-[110px] w-[2924px] rounded-[32px] border-2 border-white/30 bg-[linear-gradient(90deg,#7a9ad0_0,#7c9cd3_240px,#9c9795_380px,#a8978a_480px,#a89685_1300px,#b39c8a_2000px,#b49f8c_2380px,#b2a191_2480px,#7f9ed2_2630px,#7a9cd6_2924px)] pl-[4px] shadow-[0_-8px_40px_rgba(0,0,0,0.22)]">
      {APPS.map((a, i) => <DockSlot key={i} item={a} />)}
      <span className="mt-[12px] mr-[19px] ml-[20px] h-[82px] w-[2px] bg-[#806f60]" />
      {RECENT.map((a, i) => <DockSlot key={i} item={a} />)}
      <span className="mt-[12px] mr-[19px] ml-[20px] h-[82px] w-[2px] bg-[#4f70ac]" />
      <DockSlot item={{ icon: icons.trash }} />
    </div>
  );
}

/* Strip of rocky ground along the bottom of the wallpaper */
function Ground() {
  return (
    <svg className="absolute bottom-0 left-[384px] h-[126px] w-[2304px]">
      <defs>
        <filter id="rock" x="0" y="0" width="100%" height="100%" colorInterpolationFilters="sRGB">
          <feTurbulence type="fractalNoise" baseFrequency="0.11 0.22" numOctaves="3" seed="7" />
          <feColorMatrix values="1.9 0 0 0 -0.32  1.8 0 0 0 -0.35  1.6 0 0 0 -0.35  0 0 0 0 1" />
        </filter>
        <linearGradient id="rockShade" x1="0" y1="0" x2="0" y2="1">
          <stop offset="0" stopColor="#000" stopOpacity="0.65" />
          <stop offset="1" stopColor="#000" stopOpacity="0" />
        </linearGradient>
      </defs>
      <rect width="2304" height="126" filter="url(#rock)" />
      <rect width="2304" height="126" fill="url(#rockShade)" />
    </svg>
  );
}

export default function App() {
  return (
    <div className="relative flex h-[1920px] w-[3072px] flex-col overflow-hidden bg-[linear-gradient(180deg,#4d70ac_0%,#456aa6_60%,#5577b0_100%)] font-['Inter',sans-serif]">
      <DockGradients />
      <Ground />
      <div className="relative"><MenuBar /></div>
      <div className="relative mt-[2px] ml-[12px] flex h-[1746px] w-[3060px] flex-col overflow-hidden rounded-[24px] bg-[#f9fafb] shadow-[0_0_0_1px_rgba(30,45,70,0.6),0_20px_50px_rgba(0,0,0,0.45)]">
        <Toolbar />
        <TabBar />
        <PageHeader />
        <main className="flex min-h-0 flex-1 items-start overflow-hidden">
          <CreateLoadCard />
          <LoadsCard />
        </main>
      </div>
      <Dock />
    </div>
  );
}
